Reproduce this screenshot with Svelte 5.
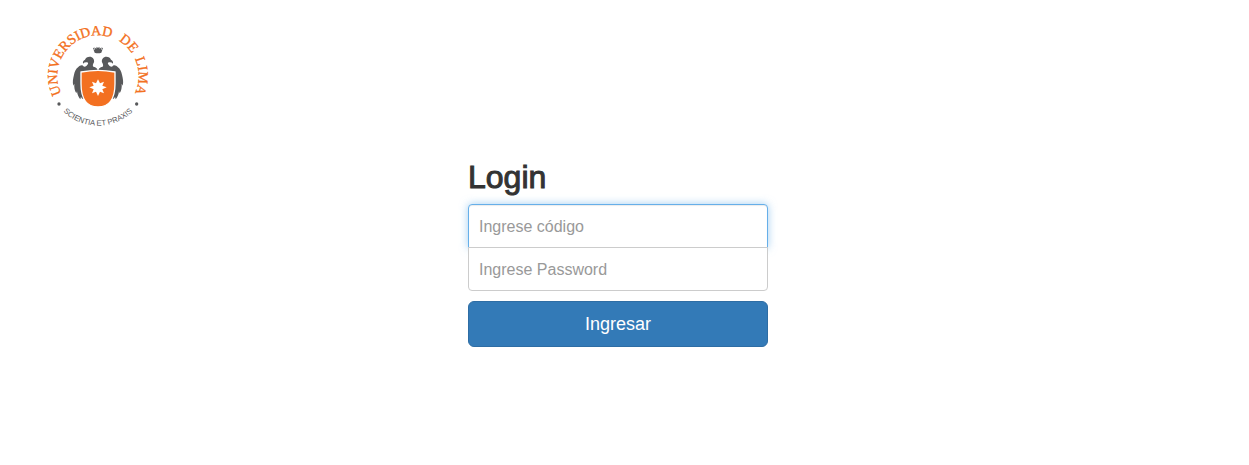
<script>
  let code = $state('');
  let password = $state('');
</script>

<div class="page">
  <header>
    <svg class="logo" viewBox="24 18 300 300" role="img" aria-label="Universidad de Lima">
      <defs>
        <path id="ring-top" d="M174 290 A122 122 0 0 1 174 46 A122 122 0 0 1 174 290" />
        <path id="ring-bottom" d="M25 168 A149 149 0 0 0 323 168" />
        <path
          id="eagle"
          d="M174 156 L172 148 C170 142 164 141 160 140 C157 137 159 132 162 127 C164 118 158 110 149 110 C142 110 137 113 135 119 C130 121 128 125 129 131 C133 127 138 126 144 128 C146 131 141 135 138 139 C134 141 131 140 129 137 C124 134 119 137 115 141 C107 147 104 155 102 164 C99 176 97 186 100 197 L103 191 C102 202 104 212 109 220 L111 214 C112 224 116 233 121 238 L123 230 C125 235 127 237 130 236 L136 224 L128 156 Z"
        />
      </defs>
      <text class="name">
        <textPath href="#ring-top" startOffset="17.8%">UNIVERSIDAD</textPath>
      </text>
      <text class="name">
        <textPath href="#ring-top" startOffset="58.4%">DE</textPath>
      </text>
      <text class="name">
        <textPath href="#ring-top" startOffset="68%">LIMA</textPath>
      </text>
      <text class="motto">
        <textPath href="#ring-bottom" startOffset="50%">SCIENTIA ET PRAXIS</textPath>
      </text>
      <g fill="#58595b">
        <circle cx="57" cy="252" r="5" />
        <circle cx="290" cy="252" r="5" />
        <use href="#eagle" />
        <use href="#eagle" transform="translate(348 0) scale(-1 1)" />
        <path d="M160 87 L165 89 L163 82 L169 86 L170 80 L174 84 L178 80 L179 86 L185 82 L183 89 L188 87 L184 98 Q174 101 164 98 Z" />
        <circle cx="161" cy="85" r="2" />
        <circle cx="187" cy="85" r="2" />
      </g>
      <path
        d="M123 156 Q150 151 174 151 Q198 151 225 156 L225 191 C225 234 208 261 174 261 C140 261 123 234 123 191 Z"
        fill="#f37021"
        stroke="#fff"
        stroke-width="4"
      />
      <path
        d="M174 178 L180 190 L192 185 L187 197 L200 202 L187 208 L192 220 L180 215 L174 228 L168 215 L156 220 L161 208 L148 202 L161 197 L156 185 L168 190 Z"
        fill="#fff"
      />
    </svg>
  </header>

  <main>
    <form onsubmit={(event) => event.preventDefault()}>
      <h2>Login</h2>
      <input class="code" type="text" aria-label="Código" placeholder="Ingrese código" bind:value={code} />
      <input class="password" type="password" aria-label="Password" placeholder="Ingrese Password" bind:value={password} />
      <button type="submit">Ingresar</button>
    </form>
  </main>
</div>

<style>
  :global(body) {
    margin: 0;
    background: #fff;
  }
  .page {
    padding: 26px 13px 40px 0;
    color: #333;
    font-family: "Liberation Sans", Arial, sans-serif;
  }
  header {
    padding-left: 48px;
  }
  .logo {
    display: block;
    width: 100px;
    height: 100px;
    overflow: visible;
  }
  .name {
    fill: #f37021;
    stroke: #f37021;
    stroke-width: 1px;
    font-family: "Liberation Serif", serif;
    font-size: 42px;
  }
  .motto {
    fill: #58595b;
    font-size: 23px;
    text-anchor: middle;
  }
  form {
    box-sizing: border-box;
    max-width: 330px;
    margin: 0 auto;
    padding: 35px 15px 15px;
  }
  h2 {
    margin: 0 0 10px;
    font-size: 32px;
    font-weight: 500;
    line-height: 33px;
    -webkit-text-stroke: 1px #333;
  }
  input {
    position: relative;
    display: block;
    box-sizing: border-box;
    width: 100%;
    height: 44px;
    padding: 12px 10px 10px;
    border: 1px solid #ccc;
    background: #fff;
    color: #555;
    font: 16px "Liberation Sans", Arial, sans-serif;
    outline: 0;
  }
  input::placeholder {
    color: #999;
    opacity: 1;
  }
  .code {
    border-color: #66afe9;
    border-radius: 4px 4px 0 0;
    box-shadow: inset 0 1px 1px rgba(0, 0, 0, 0.08), 0 0 8px rgba(102, 175, 233, 0.6);
  }
  .password {
    margin: -1px 0 10px;
    border-radius: 0 0 4px 4px;
  }
  button {
    display: block;
    width: 100%;
    padding: 10px 16px;
    border: 1px solid #2e6da4;
    border-radius: 6px;
    background: #337ab7;
    color: #fff;
    font: 18px/24px "Liberation Sans", Arial, sans-serif;
    cursor: pointer;
  }
</style>
